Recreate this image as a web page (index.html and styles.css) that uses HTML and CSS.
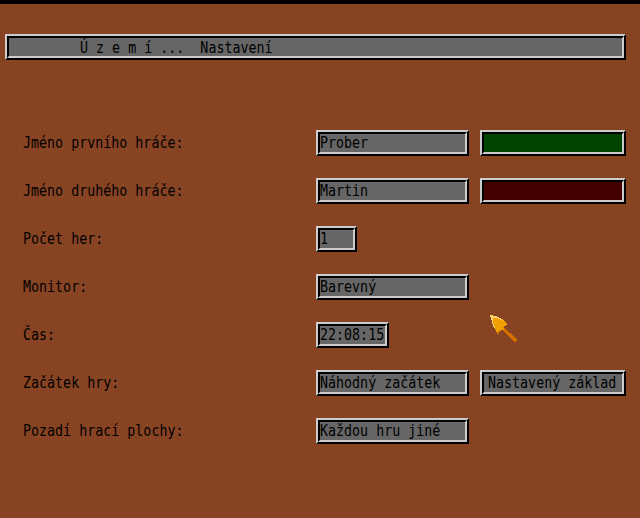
FILE: index.html
```html
<!DOCTYPE html>
<html lang="cs">
<head>
<meta charset="utf-8">
<title>Území... Nastavení</title>
<link rel="stylesheet" href="styles.css">
</head>
<body>
<div class="topbar"></div>
<div class="titlebox box"><div class="inner"><span class="t">Ú z e m í ...  Nastavení</span></div></div>

<div class="form">
  <div class="label"><span class="t">Jméno prvního hráče:</span></div>
  <div class="box w-name"><div class="inner"><span class="t">Prober</span></div></div>
  <div class="box w-wide"><div class="inner green"></div></div>

  <div class="label"><span class="t">Jméno druhého hráče:</span></div>
  <div class="box w-name"><div class="inner"><span class="t">Martin</span></div></div>
  <div class="box w-wide"><div class="inner red"></div></div>

  <div class="label"><span class="t">Počet her:</span></div>
  <div class="box w-one"><div class="inner"><span class="t">1</span></div></div>
  <div></div>

  <div class="label"><span class="t">Monitor:</span></div>
  <div class="box w-name"><div class="inner"><span class="t">Barevný</span></div></div>
  <div></div>

  <div class="label"><span class="t">Čas:</span></div>
  <div class="box w-time"><div class="inner"><span class="t">22:08:15</span></div></div>
  <div></div>

  <div class="label"><span class="t">Začátek hry:</span></div>
  <div class="box w-name"><div class="inner"><span class="t">Náhodný začátek</span></div></div>
  <div class="box w-wide"><div class="inner pad"><span class="t">Nastavený základ</span></div></div>

  <div class="label"><span class="t">Pozadí hrací plochy:</span></div>
  <div class="box w-name"><div class="inner"><span class="t">Každou hru jiné</span></div></div>
  <div></div>
</div>

<svg class="cursor" width="30" height="30" viewBox="0 0 30 30" shape-rendering="crispEdges">
  <polygon points="0,0 6,1 12,4 17,9 15,11 13,12 27,24 27,26 25,27 12,15 10,16 8,20 5,14 2,7" fill="#f0a000"/>
  <polygon points="0,0 6,1 12,4 13,6 7,3 3,3 3,7 5,13 4,13 2,7" fill="#ffd070"/>
  <polygon points="13,12 27,24 27,26 25,27 12,15 14,14" fill="#d87000"/>
  <polygon points="10,16 8,20 7,17 9,15" fill="#d87000"/>
</svg>
</body>
</html>
```

FILE: styles.css
```css
html, body {
  margin: 0;
  padding: 0;
}
body {
  background: #884422;
  width: 640px;
  height: 518px;
  overflow: hidden;
  position: relative;
  font-family: "DejaVu Sans Mono", "Liberation Mono", monospace;
  font-size: 13.33px;
  color: #000;
}
.topbar {
  height: 4px;
  background: #000;
}
.box {
  box-sizing: border-box;
  height: 26px;
  border: 2px solid;
  border-color: #cccccc #000 #000 #cccccc;
}
.inner {
  box-sizing: border-box;
  height: 100%;
  border: 2px solid;
  border-color: #000 #cccccc #cccccc #000;
  background: #666666;
  white-space: pre;
  line-height: 17px;
}
.inner.green { background: #004400; }
.inner.red { background: #440000; }
.inner.pad { padding-left: 4px; }
.t {
  display: inline-block;
  transform: scaleY(1.2);
  transform-origin: 50% 50%;
}
.titlebox {
  margin: 30px 0 0 5px;
  width: 621px;
}
.titlebox .inner {
  padding-left: 71px;
  line-height: 18px;
}
.titlebox .t {
  transform: translateY(1px) scaleY(1.15);
}
.form {
  margin-top: 70px;
  padding-left: 23px;
  display: grid;
  grid-template-columns: 293px 164px 146px;
  grid-auto-rows: 26px;
  row-gap: 22px;
}
.label {
  line-height: 26px;
  white-space: pre;
}
.w-name { width: 153px; }
.w-wide { width: 146px; }
.w-one { width: 41px; }
.w-time { width: 73px; }
.cursor {
  position: absolute;
  left: 490px;
  top: 315px;
}
```
